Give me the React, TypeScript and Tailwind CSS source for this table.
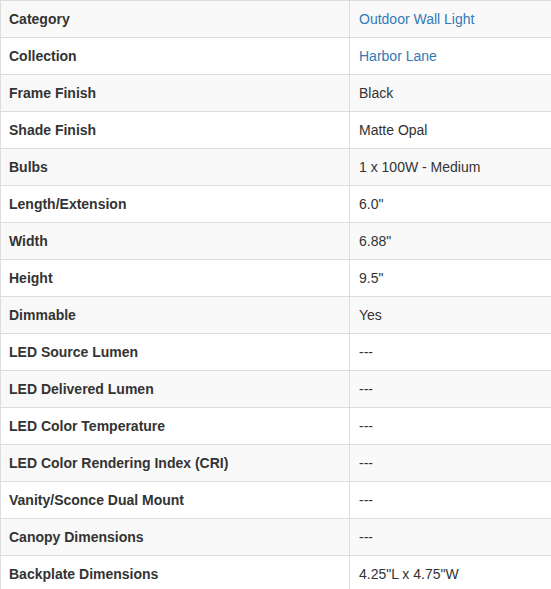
import React from "react";

const rows: [string, string, boolean?][] = [
  ["Category", "Outdoor Wall Light", true],
  ["Collection", "Harbor Lane", true],
  ["Frame Finish", "Black"],
  ["Shade Finish", "Matte Opal"],
  ["Bulbs", "1 x 100W - Medium"],
  ["Length/Extension", "6.0\""],
  ["Width", "6.88\""],
  ["Height", "9.5\""],
  ["Dimmable", "Yes"],
  ["LED Source Lumen", "---"],
  ["LED Delivered Lumen", "---"],
  ["LED Color Temperature", "---"],
  ["LED Color Rendering Index (CRI)", "---"],
  ["Vanity/Sconce Dual Mount", "---"],
  ["Canopy Dimensions", "---"],
  ["Backplate Dimensions", "4.25\"L x 4.75\"W"],
];

export default function App() {
  return (
    <div
      className="w-[551px] h-[589px] overflow-hidden bg-white text-[14px] leading-5 text-[#333]"
      style={{ fontFamily: '"Liberation Sans", Arial, sans-serif' }}
    >
      {rows.map(([label, value, link], i) => (
        <div
          key={label}
          className={`flex border-t border-[#ddd] ${i % 2 === 0 ? "bg-[#f9f9f9]" : "bg-white"}`}
        >
          <div className="w-[350px] shrink-0 border-l border-r border-[#ddd] px-2 py-2 font-bold">
            {label}
          </div>
          <div className={`flex-1 pl-[9px] pr-2 py-2 ${link ? "text-[#337ab7]" : ""}`}>
            {value}
          </div>
        </div>
      ))}
    </div>
  );
}
